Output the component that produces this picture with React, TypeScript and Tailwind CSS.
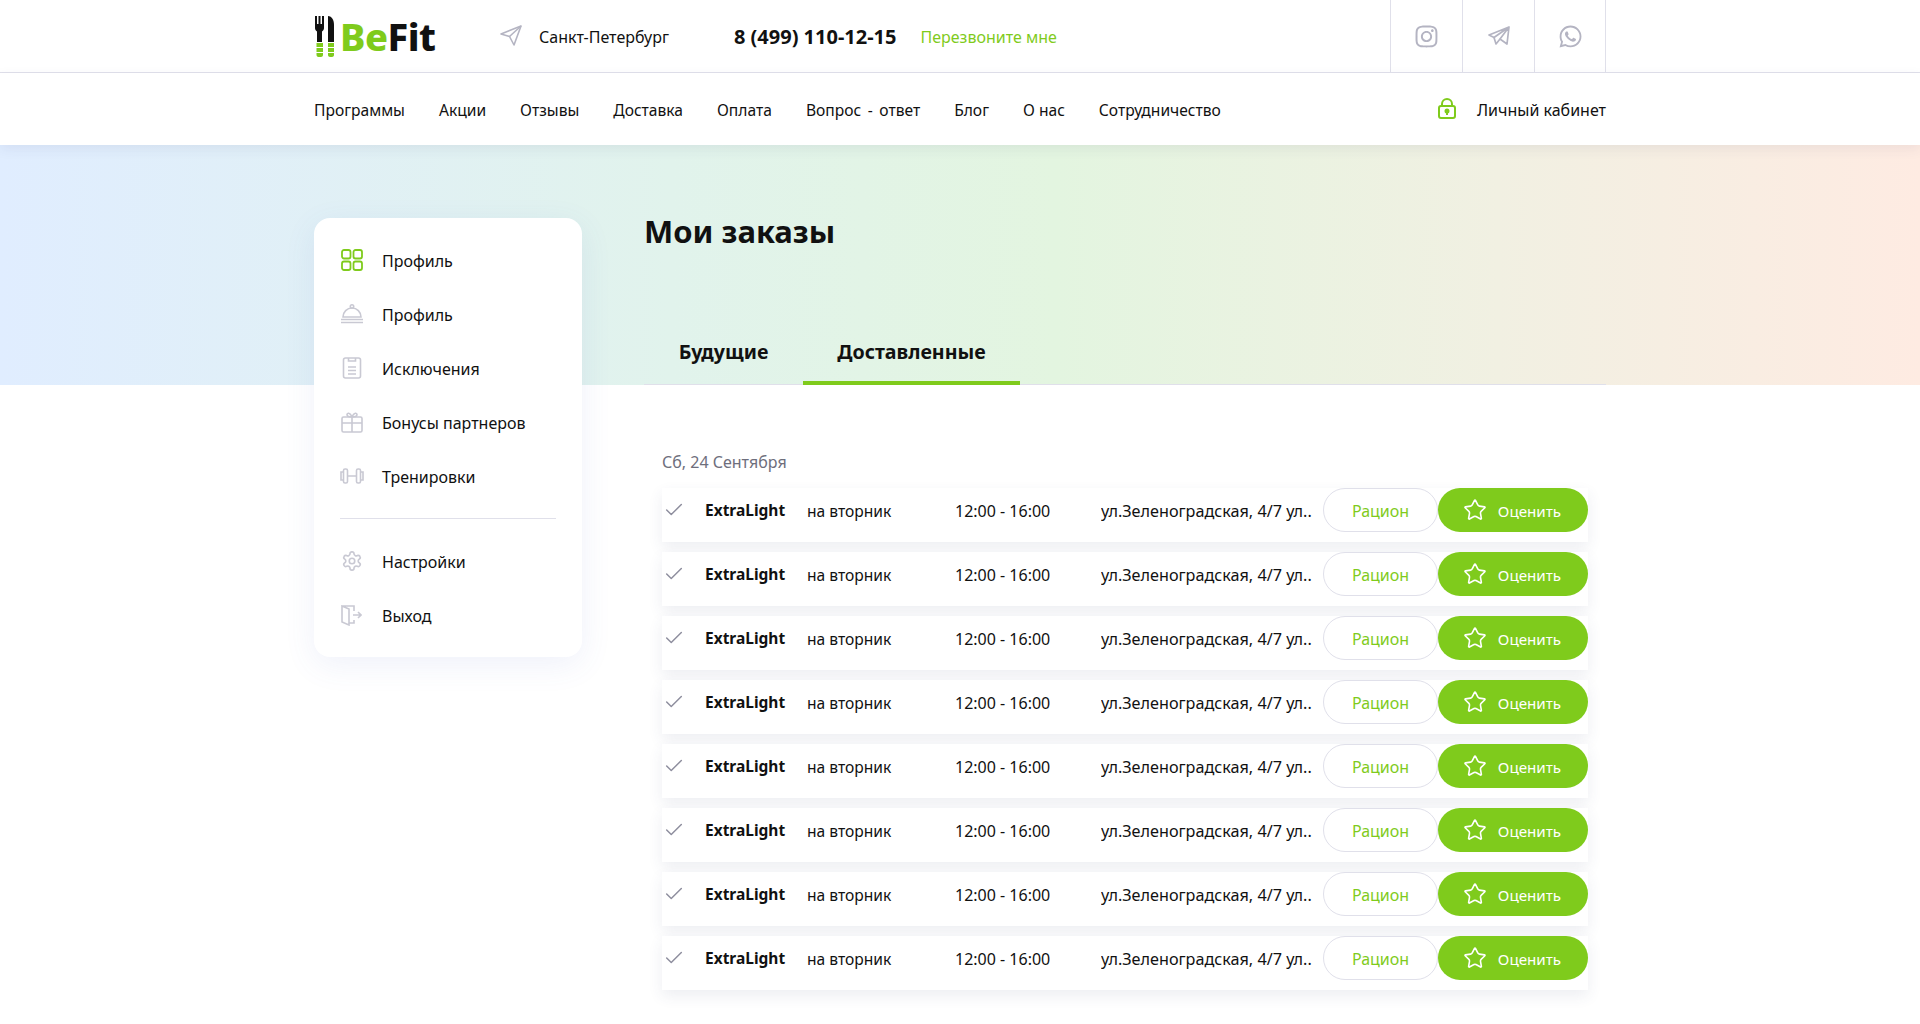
import { Check, Star } from "lucide-react";
import { FaInstagram, FaWhatsapp } from "react-icons/fa";
import type { ReactNode } from "react";

const font = { fontFamily: '"Noto Sans", sans-serif' };

const navItems = ["Программы", "Акции", "Отзывы", "Доставка", "Оплата", "Вопрос - ответ", "Блог", "О нас", "Сотрудничество"];

function Logo() {
  return (
    <div className="flex h-[42px] w-[120px] items-center">
      <svg className="shrink-0" width="20" height="41" viewBox="0 0 20 41">
        <path d="M1 0h2v8h1.500V0h2v8H8V0h2v12c0 1.500-.7 2.500-2 3.500V26H3V15.500C1.700 14.500 1 13.500 1 12z" fill="#111" />
        <path d="M14 0c3 0 6 3 6 9v17h-6z" fill="#111" />
        <path d="M2.500 27H9v4H2.500zM2.500 32H9v4H2.500zM2.500 37H9v2c0 1-1 2-2 2H4.500c-1 0-2-1-2-2z" fill="#7fcb1c" />
        <path d="M14 27h6v4h-6zM14 32h6v4h-6zM14 37h6v2c0 1-1 2-2 2h-2c-1 0-2-1-2-2z" fill="#7fcb1c" />
      </svg>
      <span className="ml-[6px] text-[38px] leading-none font-extrabold tracking-[-0.5px] text-[#7fcb1c]">
        Be<span className="text-[#111]">Fit</span>
      </span>
    </div>
  );
}

function SocialCell({ children, last }: { children: ReactNode; last?: boolean }) {
  return (
    <div className={`flex h-full w-[72px] items-center justify-center border-l border-[#e0e0ea] text-[#b4b4c2] ${last ? "border-r" : ""}`}>
      {children}
    </div>
  );
}

function Header() {
  return (
    <div className="h-[73px] border-b border-[#e0e0ea] bg-white">
      <div className="mx-auto flex h-full w-[1292px] items-center">
        <Logo />
        <svg className="ml-[66px]" width="22" height="22" viewBox="0 0 22 22" fill="none" stroke="#b4b4c2" strokeWidth="1.6" strokeLinejoin="round">
          <path d="M21 1 1 9l8.500 2.500L14 20z" />
          <path d="M21 1 9.500 11.500" />
        </svg>
        <span className="mt-[1px] ml-[17px] text-[16px] text-[#111]">Санкт-Петербург</span>
        <span className="mt-[1px] ml-[65px] text-[20px] font-bold text-[#111]">8 (499) 110-12-15</span>
        <span className="mt-[1px] ml-[24px] text-[16px] text-[#7fcb1c]">Перезвоните мне</span>
        <div className="ml-auto flex h-full">
          <SocialCell>
            <FaInstagram size={25} />
          </SocialCell>
          <SocialCell>
            <svg width="22" height="20" viewBox="0 0 22 20" fill="none" stroke="currentColor" strokeWidth="1.7" strokeLinejoin="round">
              <path d="M21 1 1 9l5 2.500L21 1l-9 12 7 5z" />
              <path d="m6 11.500 2 6.500 4-5" />
            </svg>
          </SocialCell>
          <SocialCell last>
            <FaWhatsapp size={25} />
          </SocialCell>
        </div>
      </div>
    </div>
  );
}

function Nav() {
  return (
    <div className="relative z-10 h-[72px] bg-white shadow-[0_4px_12px_rgba(60,70,110,0.08)]">
      <div className="mx-auto flex h-full w-[1292px] items-center">
        <div className="flex gap-[34px] pt-[3px]">
          {navItems.map((item) => (
            <span key={item} className={`text-[15.6px] text-[#111] ${item.includes("-") ? "[word-spacing:2.5px]" : ""}`}>
              {item}
            </span>
          ))}
        </div>
        <div className="ml-auto flex items-center">
          <svg width="18" height="22" viewBox="0 0 18 22" fill="none" stroke="#7fcb1c" strokeWidth="2">
            <rect x="1" y="8" width="16" height="12" rx="2" />
            <path d="M4 8V6a5 5 0 0 1 10 0v2" />
            <circle cx="9" cy="13" r="1.500" fill="#7fcb1c" />
            <path d="M9 14v3" />
          </svg>
          <span className="mt-[2px] ml-[21px] text-[16px] text-[#111]">Личный кабинет</span>
        </div>
      </div>
    </div>
  );
}

const g = { fill: "none", stroke: "#c9c9d3", strokeWidth: 1.6 };

const icons: Record<string, ReactNode> = {
  grid: (
    <svg width="22" height="22" viewBox="0 0 22 22" fill="none" stroke="#7fcb1c" strokeWidth="1.8">
      <rect x="1" y="1" width="8.500" height="8.500" rx="2" />
      <rect x="12.500" y="1" width="8.500" height="8.500" rx="2" />
      <rect x="1" y="12.500" width="8.500" height="8.500" rx="2" />
      <rect x="12.500" y="12.500" width="8.500" height="8.500" rx="2" />
    </svg>
  ),
  cloche: (
    <svg width="24" height="20" viewBox="0 0 24 20" {...g}>
      <circle cx="12" cy="2.500" r="1.700" />
      <path d="M3 13a9 9 0 0 1 18 0z" />
      <path d="M1 15.500h22M1 18.500h22" />
    </svg>
  ),
  list: (
    <svg width="20" height="22" viewBox="0 0 20 22" {...g}>
      <rect x="1.500" y="1" width="17" height="20" rx="2" />
      <path d="M6.500 1v3h7V1M6 10h8M6 13.500h8M6 17h8" />
    </svg>
  ),
  gift: (
    <svg width="22" height="21" viewBox="0 0 22 21" {...g}>
      <rect x="1" y="5" width="20" height="15" rx="1.500" />
      <path d="M1 11h20M11 5v15M11 5C8 5 6 4 6 2.500S9 0 11 5c2-5 5-4 5-2.500S14 5 11 5z" />
    </svg>
  ),
  dumbbell: (
    <svg width="24" height="16" viewBox="0 0 24 16" {...g}>
      <rect x="3.500" y="1" width="4" height="14" rx="1.500" />
      <rect x="16.500" y="1" width="4" height="14" rx="1.500" />
      <path d="M7.500 8h9M3.500 4H1v8h2.500M20.500 4H23v8h-2.500" />
    </svg>
  ),
  gear: (
    <svg width="22" height="22" viewBox="0 0 24 24" {...g} strokeWidth={1.8}>
      <circle cx="12" cy="12" r="3" />
      <path d="M12.200 2h-.4a2 2 0 0 0-2 2v.2a2 2 0 0 1-1 1.700l-.4.300a2 2 0 0 1-2 0l-.2-.1a2 2 0 0 0-2.700.7l-.2.400a2 2 0 0 0 .7 2.700l.2.100a2 2 0 0 1 1 1.700v.5a2 2 0 0 1-1 1.700l-.2.100a2 2 0 0 0-.7 2.700l.2.400a2 2 0 0 0 2.700.7l.2-.1a2 2 0 0 1 2 0l.4.300a2 2 0 0 1 1 1.700v.2a2 2 0 0 0 2 2h.4a2 2 0 0 0 2-2v-.2a2 2 0 0 1 1-1.700l.4-.3a2 2 0 0 1 2 0l.2.100a2 2 0 0 0 2.700-.7l.2-.4a2 2 0 0 0-.7-2.700l-.2-.1a2 2 0 0 1-1-1.700v-.5a2 2 0 0 1 1-1.700l.2-.1a2 2 0 0 0 .7-2.700l-.2-.4a2 2 0 0 0-2.700-.7l-.2.100a2 2 0 0 1-2 0l-.4-.3a2 2 0 0 1-1-1.700V4a2 2 0 0 0-2-2z" />
    </svg>
  ),
  exit: (
    <svg width="21" height="21" viewBox="0 0 21 21" {...g}>
      <path d="M1 1h12v5M13 15v3H8M1 1v16l7 3V4L1 1z" />
      <path d="M12 10h8M17 7l3 3-3 3" />
    </svg>
  ),
};

function SideItem({ icon, label }: { icon: string; label: string }) {
  return (
    <div className="flex h-[54px] items-center">
      <div className="flex w-[68px] shrink-0 justify-center pl-[7px]">{icons[icon]}</div>
      <span className="mt-[2px] text-[16px] text-[#111]">{label}</span>
    </div>
  );
}

function Sidebar() {
  return (
    <div className="h-[439px] w-[268px] shrink-0 rounded-2xl bg-white pt-[15px] shadow-[0_8px_32px_rgba(80,100,200,0.09)]">
      <SideItem icon="grid" label="Профиль" />
      <SideItem icon="cloche" label="Профиль" />
      <SideItem icon="list" label="Исключения" />
      <SideItem icon="gift" label="Бонусы партнеров" />
      <SideItem icon="dumbbell" label="Тренировки" />
      <div className="mx-[26px] mt-[15px] mb-[15px] h-px w-[216px] bg-[#e0e0ea]" />
      <SideItem icon="gear" label="Настройки" />
      <SideItem icon="exit" label="Выход" />
    </div>
  );
}

function OrderRow() {
  return (
    <div className="flex h-[54px] items-start bg-white shadow-[0_6px_14px_rgba(60,70,110,0.09)]">
      <div className="flex h-[44px] w-[43px] items-center pl-[1px]">
        <Check size={22} strokeWidth={1.6} className="text-[#8e8e9e]" />
      </div>
      <div className="h-[44px] w-[102px] text-[15.5px] leading-[44px] font-bold text-[#111]">ExtraLight</div>
      <div className="h-[44px] w-[148px] text-[15.6px] leading-[46px] text-[#111]">на вторник</div>
      <div className="h-[44px] w-[146px] text-[16px] leading-[46px] text-[#111]">12:00 - 16:00</div>
      <div className="h-[44px] w-[222px] overflow-hidden text-[16.2px] leading-[46px] whitespace-nowrap text-[#111]">ул.Зеленоградская, 4/7 ул..</div>
      <button className="h-[44px] w-[115px] rounded-[22px] border border-[#e0e0ea] bg-white pt-[2px] text-[16px] text-[#7fcb1c]">Рацион</button>
      <button className="flex h-[44px] w-[150px] items-center justify-center gap-[11px] rounded-[22px] bg-[#7fcb1c] pr-[2px] text-[15.2px] text-white">
        <Star size={24} strokeWidth={1.6} />
        <span className="pt-[3px]">Оценить</span>
      </button>
    </div>
  );
}

export default function App() {
  return (
    <div className="min-h-[1024px] bg-white" style={font}>
      <Header />
      <Nav />
      <div className="bg-[linear-gradient(90deg,#e0edff_0%,#e1f3ec_35%,#e3f5e0_55%,#f1f0e2_78%,#feebe2_100%)] bg-[length:100%_240px] bg-no-repeat">
        <div className="mx-auto flex w-[1292px] items-start gap-[62px] pt-[73px]">
          <Sidebar />
          <div className="flex-1">
            <h1 className="h-[28px] text-[31px] leading-[26px] font-bold text-[#111]">Мои заказы</h1>
            <div className="mt-[89px] flex h-[50px] border-b border-[#e0e0ea]">
              <div className="flex h-[50px] w-[159px] justify-center pt-[2px] text-[19.6px] font-bold text-[#111]">Будущие</div>
              <div className="flex h-[50px] w-[217px] justify-center border-b-4 border-[#7fcb1c] pt-[2px] text-[19.6px] font-bold text-[#111]">Доставленные</div>
            </div>
            <div className="pr-[18px] pl-[18px]">
              <div className="mt-[67px] mb-[16px] text-[16px] leading-[20px] text-[#6e6e7c]">Сб, 24 Сентября</div>
              <div className="flex flex-col gap-[10px]">
                {Array.from({ length: 8 }).map((_, i) => (
                  <OrderRow key={i} />
                ))}
              </div>
            </div>
          </div>
        </div>
      </div>
    </div>
  );
}
